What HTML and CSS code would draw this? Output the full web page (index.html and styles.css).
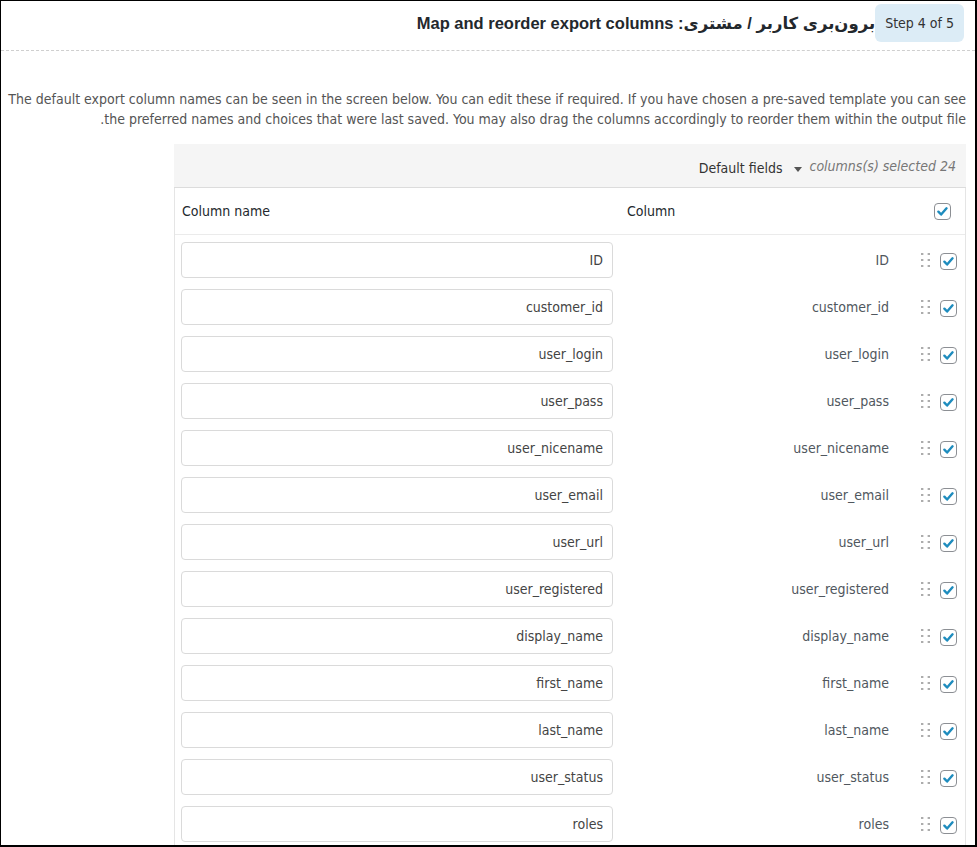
FILE: index.html
```html
<!DOCTYPE html>
<html lang="fa">
<head>
<meta charset="utf-8">
<title>Map and reorder export columns</title>
<link rel="stylesheet" href="styles.css">
</head>
<body>
<div class="frame">
  <div class="topbar" dir="rtl">
    <div class="step" dir="ltr">Step 4 of 5</div>
    <h2 class="title">برون&zwnj;بری کاربر / مشتری: Map and reorder export columns</h2>
  </div>

  <p class="desc" dir="rtl">The default export column names can be seen in the screen below. You can edit these if required. If you have chosen a pre-saved template you can see<br>the preferred names and choices that were last saved. You may also drag the columns accordingly to reorder them within the output file.</p>

  <div class="panel">
    <div class="panel-head">
      <span class="sel">Default fields<i class="caret"></i></span>
      <span class="count" dir="rtl">24 columns(s) selected</span>
    </div>
    <div class="grid">
      <div class="row head">
        <div class="c-name"><span class="th">Column name</span></div>
        <div class="c-col-h">Column</div>
        <span class="cb cb-head"><svg viewBox="0 0 16 16"><path d="M3.6 8.2l2.9 3 5.8-6.6"/></svg></span>
      </div>

      <div class="row"><div class="c-name"><input class="inp" type="text" value="ID"></div><div class="c-col">ID</div><span class="handle"></span><span class="cb"><svg viewBox="0 0 16 16"><path d="M3.6 8.2l2.9 3 5.8-6.6"/></svg></span></div>
      <div class="row"><div class="c-name"><input class="inp" type="text" value="customer_id"></div><div class="c-col">customer_id</div><span class="handle"></span><span class="cb"><svg viewBox="0 0 16 16"><path d="M3.6 8.2l2.9 3 5.8-6.6"/></svg></span></div>
      <div class="row"><div class="c-name"><input class="inp" type="text" value="user_login"></div><div class="c-col">user_login</div><span class="handle"></span><span class="cb"><svg viewBox="0 0 16 16"><path d="M3.6 8.2l2.9 3 5.8-6.6"/></svg></span></div>
      <div class="row"><div class="c-name"><input class="inp" type="text" value="user_pass"></div><div class="c-col">user_pass</div><span class="handle"></span><span class="cb"><svg viewBox="0 0 16 16"><path d="M3.6 8.2l2.9 3 5.8-6.6"/></svg></span></div>
      <div class="row"><div class="c-name"><input class="inp" type="text" value="user_nicename"></div><div class="c-col">user_nicename</div><span class="handle"></span><span class="cb"><svg viewBox="0 0 16 16"><path d="M3.6 8.2l2.9 3 5.8-6.6"/></svg></span></div>
      <div class="row"><div class="c-name"><input class="inp" type="text" value="user_email"></div><div class="c-col">user_email</div><span class="handle"></span><span class="cb"><svg viewBox="0 0 16 16"><path d="M3.6 8.2l2.9 3 5.8-6.6"/></svg></span></div>
      <div class="row"><div class="c-name"><input class="inp" type="text" value="user_url"></div><div class="c-col">user_url</div><span class="handle"></span><span class="cb"><svg viewBox="0 0 16 16"><path d="M3.6 8.2l2.9 3 5.8-6.6"/></svg></span></div>
      <div class="row"><div class="c-name"><input class="inp" type="text" value="user_registered"></div><div class="c-col">user_registered</div><span class="handle"></span><span class="cb"><svg viewBox="0 0 16 16"><path d="M3.6 8.2l2.9 3 5.8-6.6"/></svg></span></div>
      <div class="row"><div class="c-name"><input class="inp" type="text" value="display_name"></div><div class="c-col">display_name</div><span class="handle"></span><span class="cb"><svg viewBox="0 0 16 16"><path d="M3.6 8.2l2.9 3 5.8-6.6"/></svg></span></div>
      <div class="row"><div class="c-name"><input class="inp" type="text" value="first_name"></div><div class="c-col">first_name</div><span class="handle"></span><span class="cb"><svg viewBox="0 0 16 16"><path d="M3.6 8.2l2.9 3 5.8-6.6"/></svg></span></div>
      <div class="row"><div class="c-name"><input class="inp" type="text" value="last_name"></div><div class="c-col">last_name</div><span class="handle"></span><span class="cb"><svg viewBox="0 0 16 16"><path d="M3.6 8.2l2.9 3 5.8-6.6"/></svg></span></div>
      <div class="row"><div class="c-name"><input class="inp" type="text" value="user_status"></div><div class="c-col">user_status</div><span class="handle"></span><span class="cb"><svg viewBox="0 0 16 16"><path d="M3.6 8.2l2.9 3 5.8-6.6"/></svg></span></div>
      <div class="row"><div class="c-name"><input class="inp" type="text" value="roles"></div><div class="c-col">roles</div><span class="handle"></span><span class="cb"><svg viewBox="0 0 16 16"><path d="M3.6 8.2l2.9 3 5.8-6.6"/></svg></span></div>
    </div>
  </div>
</div>
</body>
</html>
```

FILE: styles.css
```css
html, body {
  margin: 0;
  padding: 0;
  background: #fff;
}

body {
  font-family: "DejaVu Sans Condensed", "DejaVu Sans", sans-serif;
  font-size: 14px;
  color: #444;
}

.frame {
  width: 977px;
  height: 847px;
  box-sizing: border-box;
  border-style: solid;
  border-color: #000;
  border-width: 1px 2px 2px 1px;
  overflow: hidden;
  background: #fff;
}

/* top bar */
.topbar {
  display: flex;
  align-items: center;
  padding: 3px 11px 8px 0;
  border-bottom: 1px dashed #cfcfcf;
}

.step {
  height: 38px;
  padding: 0 10px;
  display: flex;
  align-items: center;
  background: #dcecf6;
  border-radius: 6px;
  font-size: 14px;
  color: #333;
}

.title {
  margin: 0;
  font-family: "Liberation Sans", "DejaVu Sans", sans-serif;
  font-weight: bold;
  font-size: 16.5px;
  color: #23282d;
}

/* description */
.desc {
  margin: 38px 0 0;
  padding: 0 9px 0 0;
  line-height: 20px;
  color: #555;
}

/* panel */
.panel {
  margin: 15px 9px 0 173px;
}

.panel-head {
  height: 43px;
  background: #f5f5f5;
  border-bottom: 1px solid #dcdcdc;
  display: flex;
  justify-content: flex-end;
  align-items: center;
  padding-right: 10px;
}

.sel {
  display: flex;
  align-items: center;
  color: #333;
  margin-top: 5px;
}

.caret {
  width: 0;
  height: 0;
  border-left: 4px solid transparent;
  border-right: 4px solid transparent;
  border-top: 5px solid #555;
  margin-left: 12px;
  margin-top: 2px;
}

.count {
  margin-left: 7px;
  font-style: italic;
  color: #777;
}

.grid {
  border-left: 1px solid #e5e5e5;
  border-right: 1px solid #e5e5e5;
}

.row {
  display: flex;
  align-items: center;
  box-sizing: border-box;
  height: 47px;
  padding: 7px 0 4px;
}

.row.head {
  height: 47px;
  padding: 0;
  border-bottom: 1px solid #ebebeb;
}

.c-name {
  width: 445px;
  box-sizing: border-box;
  padding-left: 6px;
}

.th {
  padding-left: 1px;
  color: #23282d;
}

.c-col-h {
  width: 280px;
  box-sizing: border-box;
  padding-left: 7px;
  color: #23282d;
}

.inp {
  display: block;
  width: 432px;
  height: 36px;
  box-sizing: border-box;
  margin: 0;
  border: 1px solid #dadada;
  border-radius: 4px;
  padding: 0 9px 0 8px;
  background: #fff;
  text-align: right;
  font: inherit;
  color: #444;
  outline: none;
}

.c-col {
  width: 280px;
  box-sizing: border-box;
  padding-right: 11px;
  text-align: right;
  color: #50575e;
}

.handle {
  width: 9px;
  height: 14px;
  margin-left: 21px;
  background-image: radial-gradient(circle, #999 1px, transparent 1.3px);
  background-size: 7px 6px;
  background-position: -2.5px -2px;
}

.cb {
  width: 17px;
  height: 17px;
  box-sizing: border-box;
  margin-left: 10px;
  margin-top: 2px;
  border: 1px solid #8c8f94;
  border-radius: 4px;
  background: #fff;
  display: flex;
  align-items: center;
  justify-content: center;
}

.cb-head {
  width: 17px;
  height: 17px;
  margin-left: 34px;
  margin-top: 0;
}

.cb svg {
  width: 15px;
  height: 15px;
}

.cb path {
  fill: none;
  stroke: #1e8cbe;
  stroke-width: 2.6;
  stroke-linecap: round;
  stroke-linejoin: round;
}
```
